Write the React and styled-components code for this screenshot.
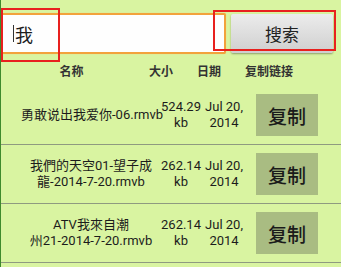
import styled, { createGlobalStyle } from "styled-components";

const GlobalStyle = createGlobalStyle`
  html, body {
    margin: 0;
    padding: 0;
    background: #d9f4a1;
  }
  * {
    box-sizing: border-box;
  }
`;

const Screen = styled.div`
  position: relative;
  width: 341px;
  height: 267px;
  overflow: hidden;
  background: #d9f4a1;
  border-left: 1px solid #3f8a2c;
  font-family: Roboto, "Noto Sans CJK SC", sans-serif;
  color: #1c1c1c;
`;

const SearchBar = styled.div`
  display: flex;
  align-items: flex-start;
  padding: 13px 8px 0 0;
  gap: 5px;
  height: 55px;
`;

const InputBox = styled.div`
  width: 225px;
  height: 41px;
  background: #fefefe;
  border: 2px solid #f2a23c;
  border-radius: 2px;
  display: flex;
  align-items: center;
  padding-left: 10px;
  font-family: "Noto Sans CJK SC", sans-serif;
  font-size: 18px;
  box-shadow: 0 0 1px #f7c070;
`;

const Caret = styled.span`
  display: inline-block;
  width: 1px;
  height: 17px;
  background: #333;
  margin-right: 1px;
`;

const SearchButton = styled.button`
  width: 102px;
  height: 39px;
  margin-top: 1px;
  border: none;
  border-radius: 2px;
  background: linear-gradient(#ececec, #cfcfcf);
  box-shadow: 0 1px 2px rgba(0, 0, 0, 0.35);
  font-family: "Noto Sans CJK SC", sans-serif;
  font-size: 17px;
  color: #222;
  padding: 0;
`;

const HeaderRow = styled.div`
  display: flex;
  height: 31px;
  align-items: center;
  font-family: "Noto Sans CJK SC", sans-serif;
  font-size: 12px;
  font-weight: 700;
  color: #333;
`;

const HeadCell = styled.div`
  width: ${(p) => p.$w}px;
  text-align: center;
`;

const Row = styled.div`
  display: flex;
  align-items: center;
  height: 59px;
  border-bottom: 1px solid #8f9a80;
`;

const NameCell = styled.div`
  width: 160px;
  padding-left: 20px;
  text-align: center;
  font-size: 13px;
  line-height: 16px;
  white-space: nowrap;
  color: #1c1c1c;
`;

const NameLine = styled.div`
  color: #1c1c1c;
`;

const DataCell = styled.div`
  width: ${(p) => p.$w}px;
  text-align: center;
  font-size: 13px;
  line-height: 16px;
  white-space: nowrap;
`;

const CopyButton = styled.button`
  width: 62px;
  height: 42px;
  margin-left: 9px;
  border: none;
  background: #a9bc82;
  font-family: "Noto Sans CJK SC", sans-serif;
  font-size: 19px;
  font-weight: 500;
  color: #1a1a1a;
  padding: 0;
`;

const Mark = styled.div`
  position: absolute;
  left: ${(p) => p.$x}px;
  top: ${(p) => p.$y}px;
  width: ${(p) => p.$w}px;
  height: ${(p) => p.$h}px;
  border: 2px solid #e8201e;
  pointer-events: none;
`;

const rows = [
  { name: ["勇敢说出我爱你-06.rmvb"], size: "524.29" },
  { name: ["我們的天空01-望子成", "龍-2014-7-20.rmvb"], size: "262.14" },
  { name: ["ATV我來自潮", "州21-2014-7-20.rmvb"], size: "262.14" },
];

export default function App() {
  return (
    <>
      <GlobalStyle />
      <Screen>
        <SearchBar>
          <InputBox>
            <Caret />我
          </InputBox>
          <SearchButton>搜索</SearchButton>
        </SearchBar>
        <HeaderRow>
          <HeadCell $w={141}>名称</HeadCell>
          <HeadCell $w={38}>大小</HeadCell>
          <HeadCell $w={58}>日期</HeadCell>
          <HeadCell $w={62}>复制链接</HeadCell>
        </HeaderRow>
        {rows.map((r, i) => (
          <Row key={i}>
            <NameCell>
              {r.name.map((l, j) => (
                <NameLine key={j}>{l}</NameLine>
              ))}
            </NameCell>
            <DataCell $w={40}>
              {r.size}
              <br />
              kb
            </DataCell>
            <DataCell $w={46}>
              Jul 20,
              <br />
              2014
            </DataCell>
            <CopyButton>复制</CopyButton>
          </Row>
        ))}
        <Mark $x={0} $y={8} $w={59} $h={54} />
        <Mark $x={212} $y={10} $w={123} $h={41} />
      </Screen>
    </>
  );
}
